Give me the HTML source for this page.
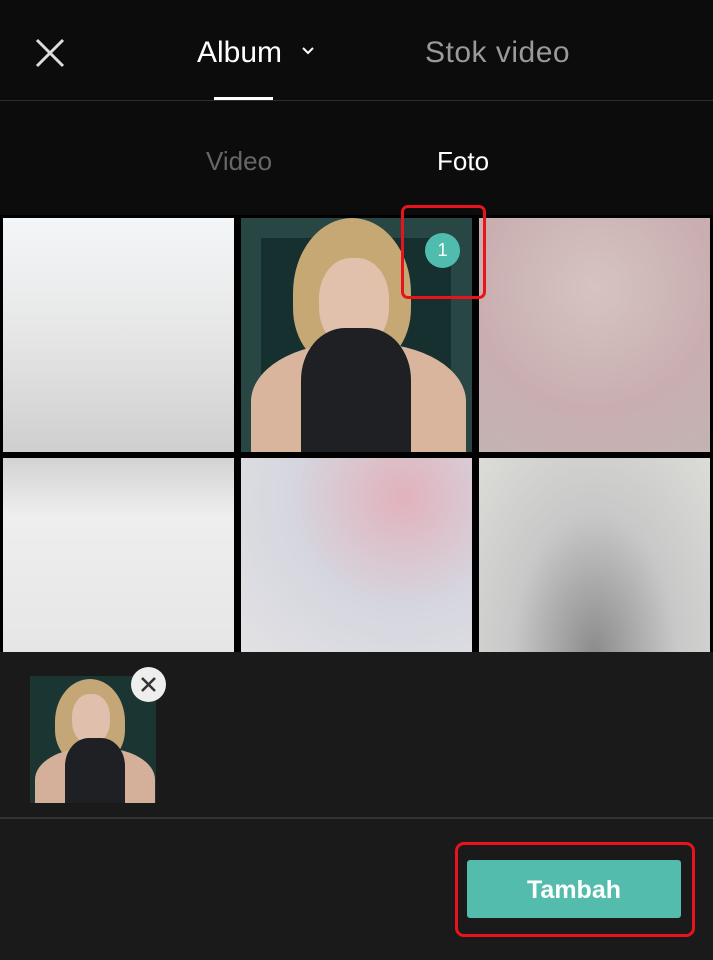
<!DOCTYPE html><html><head><style>
body{margin:0;width:713px;height:960px;background:#0c0c0c;position:relative;overflow:hidden;font-family:"Liberation Sans",sans-serif}
.a{position:absolute}
.t{position:absolute;overflow:hidden}
</style></head><body>
<svg class="a" style="left:34px;top:37px" width="32" height="32"><path d="M3 3L29 29M29 3L3 29" stroke="#ddd" stroke-width="3"/></svg>
<div class="a" style="left:197px;top:36px;color:#fff;font-size:30px">Album</div>
<svg class="a" style="left:301px;top:46px" width="14" height="10"><path d="M2 2L7 7L12 2" stroke="#fff" stroke-width="2" fill="none"/></svg>
<div class="a" style="left:425px;top:36px;color:#9a9a9a;font-size:30px;letter-spacing:0.5px">Stok video</div>
<div class="a" style="left:214px;top:97px;width:59px;height:4px;background:#fff"></div>
<div class="a" style="left:0;top:100px;width:713px;height:1px;background:#2e2e2e"></div>
<div class="a" style="left:206px;top:146px;color:#666;font-size:26px">Video</div>
<div class="a" style="left:437px;top:146px;color:#fff;font-size:26px">Foto</div>
<div class="a" style="left:0;top:215px;width:713px;height:440px;background:#000"></div>
<div class="t" style="left:3px;top:218px;width:231px;height:234px;background:linear-gradient(#f3f6f8,#e6e6e6 50%,#cfcfcf)"></div>
<div class="t" style="left:241px;top:218px;width:231px;height:234px;background:#284744">
 <div class="a" style="left:20px;top:20px;width:190px;height:200px;background:#15302e"></div>
 <div class="a" style="left:52px;top:0;width:118px;height:150px;border-radius:50% 50% 40% 40%;background:#c6a874"></div>
 <div class="a" style="left:78px;top:40px;width:70px;height:90px;border-radius:45%;background:#e2c1ac"></div>
 <div class="a" style="left:10px;top:125px;width:215px;height:130px;border-radius:45% 45% 0 0;background:#d9b59e"></div>
 <div class="a" style="left:60px;top:110px;width:110px;height:130px;border-radius:40% 40% 0 0;background:#1e2023"></div>
</div>
<div class="t" style="left:479px;top:218px;width:231px;height:234px;background:radial-gradient(circle at 50% 30%,#d6c4c1,#c9aeb0 60%,#c3b3b2)"></div>
<div class="t" style="left:3px;top:458px;width:231px;height:194px;background:linear-gradient(#d3d3d3,#eeeeee 30%,#e6e6e6)"></div>
<div class="t" style="left:241px;top:458px;width:231px;height:194px;background:radial-gradient(circle at 70% 20%,#e1b2bc,#d5d6df 50%,#e2e2e4)"></div>
<div class="t" style="left:479px;top:458px;width:231px;height:194px;background:radial-gradient(ellipse at 50% 100%,#8c8c8c,#c8c8c8 50%,#dcdcd8)"></div>
<div class="a" style="left:425px;top:233px;width:35px;height:35px;border-radius:50%;background:#4fbcad;color:#fff;font-size:18px;text-align:center;line-height:35px">1</div>
<div class="a" style="left:401px;top:205px;width:79px;height:88px;border:3px solid #e8141c;border-radius:7px"></div>
<div class="a" style="left:0;top:652px;width:713px;height:308px;background:#1a1a1a"></div>
<div class="t" style="left:30px;top:676px;width:126px;height:127px;background:#1b3533">
 <div class="a" style="left:25px;top:3px;width:70px;height:85px;border-radius:50% 50% 40% 40%;background:#c4a677"></div>
 <div class="a" style="left:42px;top:18px;width:38px;height:50px;border-radius:45%;background:#e0c0ad"></div>
 <div class="a" style="left:5px;top:72px;width:120px;height:70px;border-radius:45% 45% 0 0;background:#d4b09a"></div>
 <div class="a" style="left:35px;top:62px;width:60px;height:70px;border-radius:40% 40% 0 0;background:#1e2023"></div>
</div>
<div class="a" style="left:131px;top:667px;width:35px;height:35px;border-radius:50%;background:#eee"></div>
<svg class="a" style="left:140px;top:676px" width="17" height="17"><path d="M2 2L15 15M15 2L2 15" stroke="#333" stroke-width="2.5"/></svg>
<div class="a" style="left:0;top:817px;width:713px;height:2px;background:#333"></div>
<div class="a" style="left:467px;top:860px;width:214px;height:58px;border-radius:3px;background:#53bcac;color:#fff;font-weight:bold;font-size:25px;text-align:center;line-height:60px">Tambah</div>
<div class="a" style="left:455px;top:842px;width:234px;height:89px;border:3px solid #e8141c;border-radius:9px"></div>
</body></html>
